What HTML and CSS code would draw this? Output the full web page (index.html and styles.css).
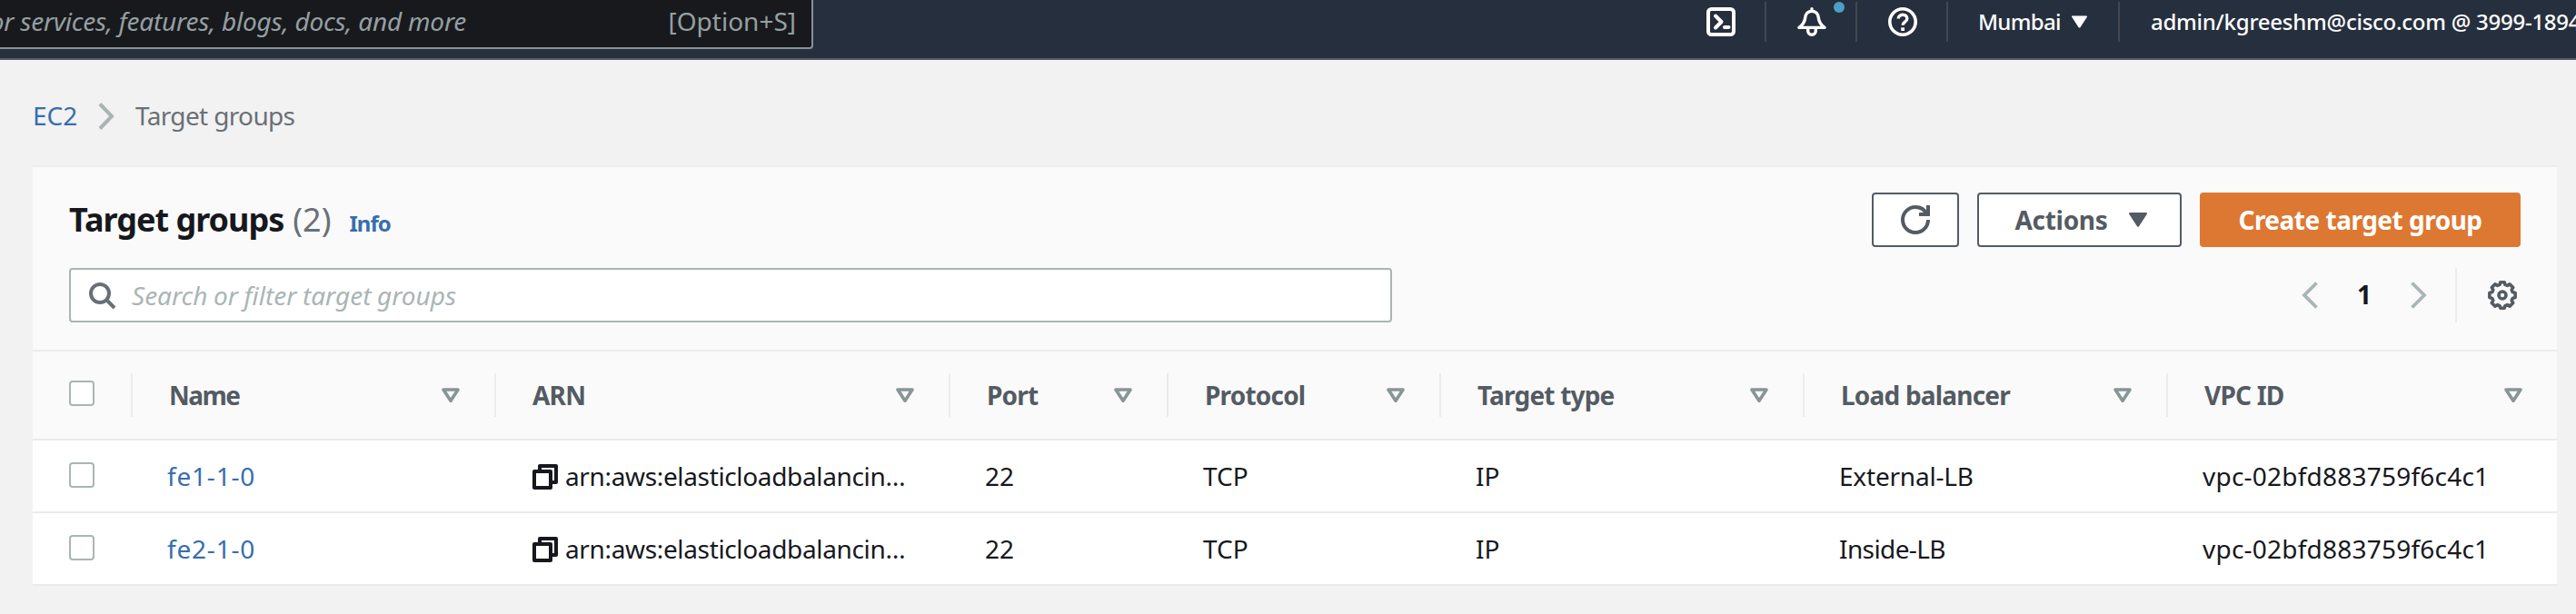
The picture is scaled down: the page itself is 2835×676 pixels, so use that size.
FILE: index.html
```html
<!DOCTYPE html>
<html lang="en">
<head>
<meta charset="utf-8">
<title>Target groups</title>
<link rel="stylesheet" href="styles.css">
</head>
<body>
<svg class="sprite" aria-hidden="true">
  <symbol id="sort" viewBox="0 0 20 16"><path d="M2 2h16l-8 12.3z" fill="none" stroke="currentColor" stroke-width="3.6" stroke-linejoin="round"/></symbol>
  <symbol id="caret" viewBox="0 0 20 16"><path d="M1.2 1.2h17.6L10 14.6z" fill="currentColor" stroke="currentColor" stroke-width="2.4" stroke-linejoin="round"/></symbol>
  <symbol id="copy" viewBox="0 0 28 28"><path d="M2 8h18v18H2zM8 8V2h18v18h-6" fill="none" stroke="currentColor" stroke-width="4" stroke-linejoin="round"/></symbol>
</svg>

<header class="nav">
  <div class="nav-search">
    <div class="nav-hint"><span>or services, features, blogs, docs, and more</span></div>
    <span class="nav-key">[Option+S]</span>
  </div>
  <div class="nav-items">
    <div class="nav-item">
      <svg class="icon" viewBox="0 0 32 32" fill="none" stroke="currentColor"><rect x="2" y="2" width="28" height="28" rx="3.5" stroke-width="4"/><path d="M10 9.5l6.5 6.5-6.5 6.5M20 22h4.5" stroke-width="4" stroke-linecap="round" stroke-linejoin="round"/></svg>
    </div>
    <div class="nav-item">
      <svg class="icon" viewBox="0 0 32 32" fill="none" stroke="currentColor" stroke-width="3.4" stroke-linejoin="round" stroke-linecap="round"><path d="M16 1.8v2M2 22.4h28c-4-3-6.200-6-6.600-10.400C23 7 20 4.200 16 4.200S9 7 8.600 12C8.200 16.400 6 19.400 2 22.400zM11.700 23v3c0 2.600 1.800 4.200 4.300 4.200s4.300-1.600 4.300-4.200v-3"/></svg>
      <span class="badge"></span>
    </div>
    <div class="nav-item">
      <svg class="icon" viewBox="0 0 32 32" fill="none" stroke="currentColor"><circle cx="16" cy="16" r="14.200" stroke-width="3.600"/><path d="M11.200 12.600c0-2.700 2-4.300 4.800-4.300s4.800 1.600 4.800 4.100c0 3.800-4.700 3.700-4.700 7.300" stroke-width="3.400"/><path d="M14.200 22.300h3.800v3.700h-3.800z" fill="currentColor" stroke="none"/></svg>
    </div>
    <div class="nav-item nav-region"><span>Mumbai</span><svg class="nav-caret" viewBox="0 0 20 16"><use href="#caret"/></svg></div>
    <div class="nav-account">admin/kgreeshm@cisco.com @ 3999-1894</div>
  </div>
</header>

<main class="page">
  <nav class="crumbs">
    <a class="link">EC2</a>
    <svg class="crumb-sep" viewBox="0 0 18 30"><path d="M2 1.500L15 15 2 28.500" fill="none" stroke="currentColor" stroke-width="4"/></svg>
    <span class="crumb-current">Target groups</span>
  </nav>

  <section class="card">
    <div class="card-head">
      <div class="title-row">
        <h1 class="title">Target groups</h1>
        <span class="count">(2)</span>
        <a class="link info">Info</a>
      </div>
      <div class="buttons">
        <button class="btn btn-icon"><svg class="icon" viewBox="0 0 16 16" fill="none" stroke="currentColor" stroke-width="2"><path d="M10 5h5V0"/><path d="M15 8a6.957 6.957 0 0 1-7 7 6.957 6.957 0 0 1-7-7 6.957 6.957 0 0 1 7-7 6.870 6.870 0 0 1 6.300 4"/></svg></button>
        <button class="btn btn-actions"><span>Actions</span><svg class="caret" viewBox="0 0 20 16"><use href="#caret"/></svg></button>
        <button class="btn btn-primary">Create target group</button>
      </div>
    </div>

    <div class="card-tools">
      <div class="filter">
        <svg class="icon" viewBox="0 0 32 32" fill="none" stroke="currentColor" stroke-width="4"><circle cx="14" cy="14" r="10"/><path d="M21 21l9 9"/></svg>
        <span class="filter-hint">Search or filter target groups</span>
      </div>
      <div class="pager">
        <svg class="page-arrow" viewBox="0 0 18 30"><path d="M16.500 1.500L3 15l13.500 13.500" fill="none" stroke="currentColor" stroke-width="3.800"/></svg>
        <span class="page-number">1</span>
        <svg class="page-arrow" viewBox="0 0 18 30"><path d="M1.500 1.500L15 15 1.500 28.500" fill="none" stroke="currentColor" stroke-width="3.800"/></svg>
        <div class="settings">
          <svg class="icon" viewBox="0 0 16 16" fill="none" stroke="currentColor" stroke-width="1.800" stroke-linejoin="round"><circle cx="8" cy="8" r="2"/><path d="M15.070 6.700v2.600l-1.470.4-.5 1.200.76 1.320-1.840 1.840-1.320-.76-1.200.5-.4 1.300H6.900l-.4-1.300-1.200-.5-1.320.76-1.840-1.840.76-1.320-.5-1.200-1.470-.4V6.700l1.470-.4.5-1.200-.76-1.320 1.840-1.840 1.320.76 1.200-.5.4-1.300h2.200l.4 1.300 1.200.5 1.320-.76 1.840 1.840-.76 1.320.5 1.200z"/></svg>
        </div>
      </div>
    </div>

    <div class="table">
      <div class="row row-head">
        <div class="check-cell"><span class="check"></span></div>
        <div class="th"><span class="th-name">Name</span><svg class="sort"><use href="#sort"/></svg></div>
        <div class="th"><span>ARN</span><svg class="sort"><use href="#sort"/></svg></div>
        <div class="th"><span>Port</span><svg class="sort"><use href="#sort"/></svg></div>
        <div class="th"><span>Protocol</span><svg class="sort"><use href="#sort"/></svg></div>
        <div class="th"><span>Target type</span><svg class="sort"><use href="#sort"/></svg></div>
        <div class="th"><span>Load balancer</span><svg class="sort"><use href="#sort"/></svg></div>
        <div class="th"><span>VPC ID</span><svg class="sort"><use href="#sort"/></svg></div>
      </div>
      <div class="row">
        <div class="check-cell"><span class="check"></span></div>
        <div class="td"><a class="link name">fe1-1-0</a></div>
        <div class="td td-arn"><svg class="copy"><use href="#copy"/></svg><span class="arn">arn:aws:elasticloadbalancin…</span></div>
        <div class="td">22</div>
        <div class="td">TCP</div>
        <div class="td">IP</div>
        <div class="td lb">External-LB</div>
        <div class="td vpc">vpc-02bfd883759f6c4c1</div>
      </div>
      <div class="row">
        <div class="check-cell"><span class="check"></span></div>
        <div class="td"><a class="link name">fe2-1-0</a></div>
        <div class="td td-arn"><svg class="copy"><use href="#copy"/></svg><span class="arn">arn:aws:elasticloadbalancin…</span></div>
        <div class="td">22</div>
        <div class="td">TCP</div>
        <div class="td">IP</div>
        <div class="td lb-inside">Inside-LB</div>
        <div class="td vpc">vpc-02bfd883759f6c4c1</div>
      </div>
    </div>
  </section>
</main>
</body>
</html>
```
FILE: styles.css
```css
* { box-sizing: border-box; }
body {
  margin: 0;
  height: 676px;
  overflow: hidden;
  background: #f2f2f2;
  color: #16181d;
  font: 28px/38px "Noto Sans", "Open Sans", sans-serif;
  white-space: nowrap;
}
.sprite { display: none; }
.icon { width: 32px; height: 32px; flex: none; display: block; }
.link { color: #376eae; }

/* Top navigation */
.nav {
  display: flex;
  justify-content: space-between;
  align-items: flex-start;
  height: 66px;
  background: #262f3e;
  border-bottom: 2px solid #535b65;
  color: #fff;
  overflow: hidden;
}
.nav-search {
  display: flex;
  justify-content: space-between;
  align-items: center;
  width: 895px;
  height: 54px;
  padding: 0 17px 6px 0;
  background: #18191d;
  border: solid #879293;
  border-width: 0 2px 2px 0;
  border-radius: 0 0 4px 0;
  color: #95a0a2;
}
.nav-hint {
  display: flex;
  justify-content: flex-end;
  width: 513px;
  font-style: italic;
  letter-spacing: -0.22px;
}
.nav-items { display: flex; align-items: flex-start; width: 991px; padding-top: 2px; flex: none; }
.nav-item {
  position: relative;
  display: flex;
  align-items: center;
  flex: none;
  width: 100px;
  height: 44px;
  padding-left: 34px;
  border-right: 2px solid #424751;
}
.badge {
  position: absolute;
  top: 0;
  left: 74px;
  width: 12px;
  height: 12px;
  border-radius: 50%;
  background: #4aa0c6;
}
.nav-region { width: 189px; padding-left: 33px; font-size: 24px; font-weight: 500; letter-spacing: -0.7px; }
.nav-caret { width: 17px; height: 14px; margin-left: 12px; }
.nav-account {
  flex: none;
  width: 502px;
  height: 44px;
  padding-left: 34px;
  font-size: 24px;
  font-weight: 500;
  line-height: 44px;
  letter-spacing: -0.25px;
}

/* Page */
.page { padding: 47px 21px 0 36px; }
.crumbs { display: flex; align-items: center; height: 30px; }
.crumbs .link { width: 72px; line-height: 28px; padding-bottom: 2px; }
.crumb-sep { width: 18px; height: 30px; color: #aab3b4; }
.crumb-current { margin-left: 23px; padding-bottom: 2px; line-height: 28px; color: #6a7076; letter-spacing: -0.65px; }

.card { margin-top: 39px; background: #fafafa; border-top: 2px solid #ebeced; }
.card-head { display: flex; justify-content: space-between; align-items: center; height: 116px; padding: 0 40px; }
.title-row { display: flex; align-items: baseline; line-height: 48px; padding-top: 3px; }
.title { margin: 0; font-size: 36px; font-weight: 700; letter-spacing: -1px; }
.count { margin-left: 10px; font-size: 36px; color: #6a7076; }
.info { margin-left: 20px; font-size: 24px; font-weight: 700; letter-spacing: -1px; }
.buttons { display: flex; gap: 20px; }
.btn {
  display: flex;
  align-items: center;
  justify-content: center;
  height: 60px;
  padding: 0;
  border: 2px solid #545b63;
  border-radius: 4px;
  background: #fff;
  color: #545b63;
  font: inherit;
  font-weight: 700;
}
.btn-icon { width: 96px; }
.btn-actions { width: 225px; gap: 23px; padding-left: 3px; letter-spacing: -0.3px; }
.caret { width: 20px; height: 16px; }
.btn-primary { width: 353px; border-color: #dd7833; background: #dd7833; color: #fff; letter-spacing: -0.5px; }

.card-tools { display: flex; justify-content: space-between; height: 85px; padding: 0 40px; margin-top: -5px; }
.filter {
  display: flex;
  align-items: center;
  width: 1456px;
  height: 60px;
  padding-left: 18px;
  border: 2px solid #aab5b5;
  border-radius: 4px;
  background: #fff;
  color: #686f76;
}
.filter-hint { margin-left: 17px; color: #aab5b5; font-style: italic; word-spacing: -0.7px; }
.pager { display: flex; align-items: center; height: 60px; }
.page-arrow { width: 18px; height: 30px; color: #aab5b5; }
.page-number { width: 102px; text-align: center; font-weight: 700; line-height: 58px; padding-bottom: 2px; }
.settings { display: flex; align-items: center; width: 72px; height: 60px; margin-left: 31px; padding-left: 34px; border-left: 2px solid #ebeced; color: #545b63; }

/* Table */
.table { margin-top: 5px; border-top: 2px solid #eaecec; }
.row {
  display: grid;
  grid-template-columns: 108px 400px 500px 240px 300px 400px 400px 430px;
  align-items: center;
  height: 80px;
  background: #fff;
  border-bottom: 2px solid #e9ebeb;
}
.row-head { height: 98px; background: #fafafa; color: #545b63; font-weight: 700; }
.check-cell { padding: 0 0 2px 40px; }
.row-head .check-cell { padding-bottom: 4px; }
.check { display: block; width: 28px; height: 28px; border: 2px solid #aab5b5; border-radius: 4px; background: #fff; }
.th {
  display: flex;
  align-items: center;
  justify-content: space-between;
  height: 48px;
  padding: 0 38px 0 40px;
  border-left: 2px solid #eaeded;
  letter-spacing: -0.8px;
}
.th-name { letter-spacing: -1.5px; }
.sort { width: 20px; height: 16px; color: #879596; }
.td { padding-left: 40px; }
.td-arn { display: flex; align-items: center; padding-left: 42px; }
.copy { width: 28px; height: 28px; flex: none; margin-top: 2px; }
.arn { margin-left: 8px; letter-spacing: -0.35px; }
.name { letter-spacing: 0.8px; }
.lb { letter-spacing: -0.2px; }
.lb-inside { letter-spacing: -0.6px; }
.vpc { letter-spacing: 0.22px; }
```
